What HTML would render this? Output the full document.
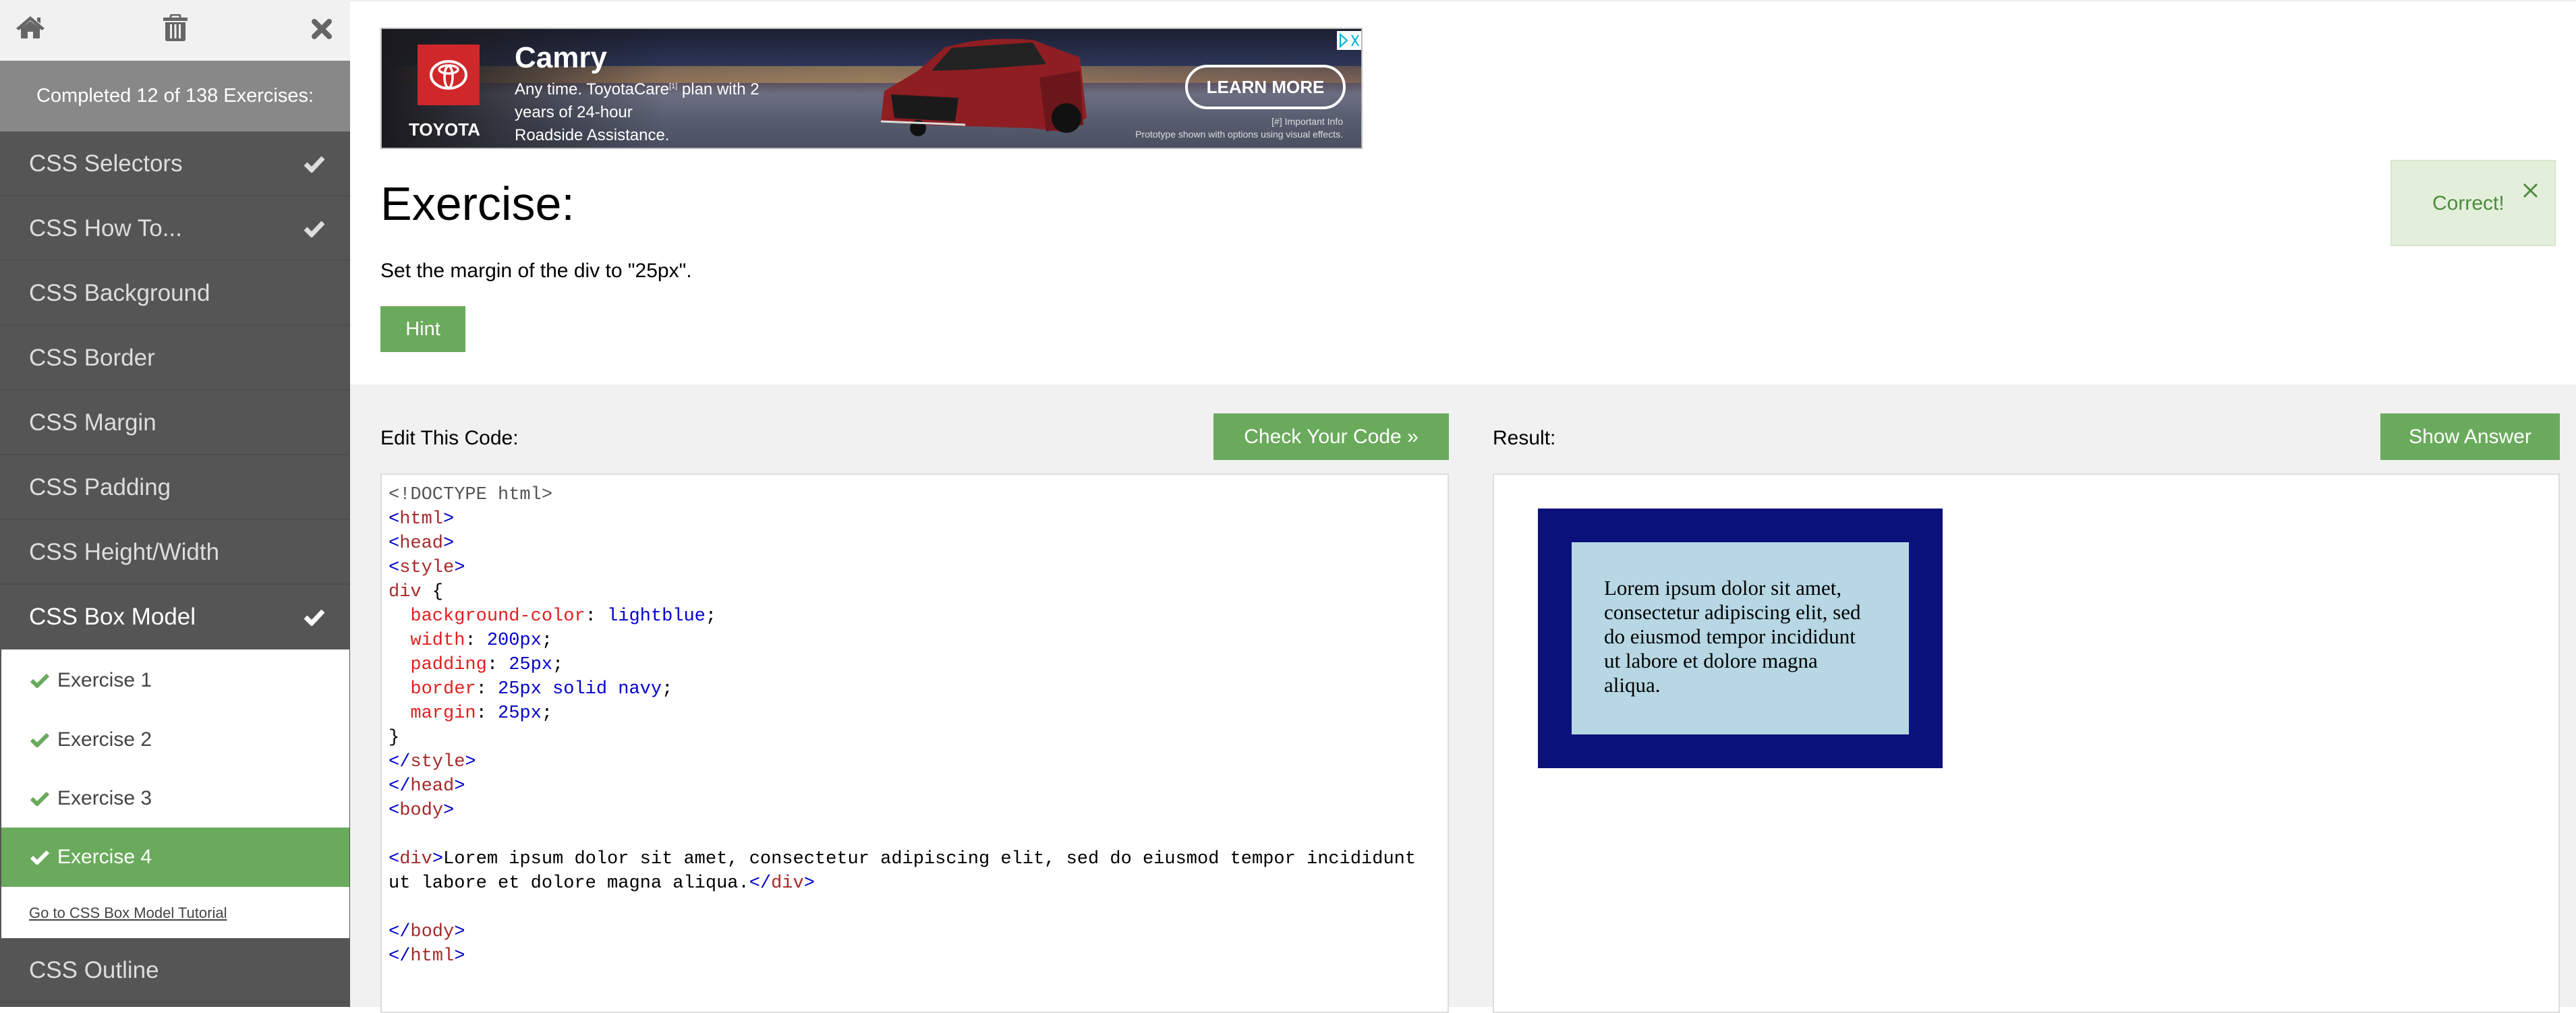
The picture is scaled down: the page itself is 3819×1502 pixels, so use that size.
<!DOCTYPE html>
<html><head><meta charset="utf-8"><style>
*{margin:0;padding:0;box-sizing:border-box}
body{width:3819px;height:1493px;overflow:hidden;background:#fff;font-family:"Liberation Sans",sans-serif;position:relative}
.abs{position:absolute}
#side{left:0;top:0;width:519px;height:1493px;background:#555}
#topbar{left:0;top:0;width:519px;height:90px;background:#f1f1f1}
#done{left:0;top:90px;width:519px;height:105px;background:#888;color:#fff;font-size:29px;text-align:center;line-height:105px}
.item{position:absolute;left:0;width:519px;height:96px;border-bottom:2px solid #4d4d4d;color:#ddd;font-size:35px;line-height:96px;padding-left:43px}
.item .ck{position:absolute;left:450px;top:35px}
#list{left:2px;top:963px;width:516px;height:428px;background:#fff}
.ex{position:absolute;left:0;width:516px;height:88px;line-height:88px;font-size:30px;color:#444;padding-left:83px}
.ex svg{position:absolute;left:42px;top:33px}
#main{left:519px;top:570px;width:3300px;height:923px;background:#f1f1f1}
.btn{position:absolute;background:#6aaa5c;color:#fff;text-align:center}
.code{font-family:"Liberation Mono",monospace;font-size:27px;line-height:36px;white-space:pre;color:#000}
.t{color:#a52a2a}.b{color:#0000cd}.p{color:#e02020}.v{color:#0000cd}
</style></head><body>
<div class="abs" style="left:0;top:0;width:3819px;height:2px;background:#eee"></div>
<div id="side" class="abs"></div>
<div id="topbar" class="abs">
<svg class="abs" style="left:22px;top:22px" width="46" height="36" viewBox="0 0 46 36"><path d="M23 2 L2 20 L6 23 L23 8 L40 23 L44 20 Z M33 4 h5 v9 l-5-4Z" fill="#666"/><path d="M9 20 L23 9 L37 20 V35 H27 V25 H19 V35 H9Z" fill="#666"/></svg>
<svg class="abs" style="left:241px;top:21px" width="38" height="41" viewBox="0 0 38 41"><rect x="1" y="5" width="36" height="5" fill="#666"/><rect x="12" y="1" width="14" height="6" rx="2" fill="none" stroke="#666" stroke-width="3"/><path d="M4 12 H34 V37 Q34 40 31 40 H7 Q4 40 4 37Z" fill="#666"/><rect x="11" y="15" width="3" height="21" fill="#f1f1f1"/><rect x="17.5" y="15" width="3" height="21" fill="#f1f1f1"/><rect x="24" y="15" width="3" height="21" fill="#f1f1f1"/></svg>
<svg class="abs" style="left:461px;top:27px" width="32" height="32" viewBox="0 0 32 32"><path d="M5 5 L27 27 M27 5 L5 27" stroke="#666" stroke-width="8" stroke-linecap="round"/></svg>
</div>
<div id="done" class="abs">Completed 12 of 138 Exercises:</div>
<div class="item" style="top:195px">CSS Selectors<svg class="ck" width="32" height="26" viewBox="0 0 32 26"><path d="M3 13 L12 22 L29 4" stroke="#ddd" stroke-width="7" fill="none"/></svg></div>
<div class="item" style="top:291px">CSS How To...<svg class="ck" width="32" height="26" viewBox="0 0 32 26"><path d="M3 13 L12 22 L29 4" stroke="#ddd" stroke-width="7" fill="none"/></svg></div>
<div class="item" style="top:387px">CSS Background</div>
<div class="item" style="top:483px">CSS Border</div>
<div class="item" style="top:579px">CSS Margin</div>
<div class="item" style="top:675px">CSS Padding</div>
<div class="item" style="top:771px">CSS Height/Width</div>
<div class="item" style="top:867px;color:#fff;border:none">CSS Box Model<svg class="ck" width="32" height="26" viewBox="0 0 32 26"><path d="M3 13 L12 22 L29 4" stroke="#fff" stroke-width="7" fill="none"/></svg></div>
<div id="list" class="abs">
<div class="ex" style="top:2px"><svg width="30" height="22" viewBox="0 0 30 22"><path d="M3 11 L11 19 L27 3" stroke="#6aaa5c" stroke-width="6" fill="none"/></svg>Exercise 1</div>
<div class="ex" style="top:90px"><svg width="30" height="22" viewBox="0 0 30 22"><path d="M3 11 L11 19 L27 3" stroke="#6aaa5c" stroke-width="6" fill="none"/></svg>Exercise 2</div>
<div class="ex" style="top:177px"><svg width="30" height="22" viewBox="0 0 30 22"><path d="M3 11 L11 19 L27 3" stroke="#6aaa5c" stroke-width="6" fill="none"/></svg>Exercise 3</div>
<div class="ex" style="top:264px;background:#6aaa5c;color:#fff"><svg width="30" height="22" viewBox="0 0 30 22"><path d="M3 11 L11 19 L27 3" stroke="#fff" stroke-width="6" fill="none"/></svg>Exercise 4</div>
<div class="abs" style="left:41px;top:378px;font-size:22px;color:#444;text-decoration:underline">Go to CSS Box Model Tutorial</div>
</div>
<div class="item" style="top:1391px">CSS Outline</div>

<!-- ad -->
<div class="abs" style="left:564px;top:41px;width:1456px;height:180px;border:2px solid #bbb;overflow:hidden;background:linear-gradient(180deg,#1b1f30 0%,#2c3556 30%,#5a5060 45%,#6a6e80 55%,#585e70 75%,#4a5062 100%)">
 <div class="abs" style="left:0;top:55px;width:1456px;height:25px;background:linear-gradient(90deg,rgba(200,140,60,.35),rgba(220,170,90,.5),rgba(200,140,60,.3))"></div>
 <div class="abs" style="left:0;top:0;width:420px;height:180px;background:linear-gradient(90deg,#1a1a1e,rgba(30,30,36,0))"></div>
 <div class="abs" style="left:53px;top:23px;width:92px;height:90px;background:#d0282a"></div>
 <svg class="abs" style="left:70px;top:45px" width="58" height="46" viewBox="0 0 58 46"><ellipse cx="29" cy="23" rx="26" ry="20" fill="none" stroke="#fff" stroke-width="4"/><ellipse cx="29" cy="15" rx="14" ry="6" fill="none" stroke="#fff" stroke-width="3.5"/><ellipse cx="29" cy="26" rx="6" ry="16" fill="none" stroke="#fff" stroke-width="3.5"/></svg>
 <div class="abs" style="left:40px;top:134px;color:#fff;font-weight:bold;font-size:26px">TOYOTA</div>
 <div class="abs" style="left:197px;top:18px;color:#fff;font-weight:bold;font-size:44px">Camry</div>
 <div class="abs" style="left:197px;top:68px;color:#fff;font-size:24px;line-height:34px">Any time. ToyotaCare<sup style="font-size:11px">[1]</sup> plan with 2<br>years of 24-hour<br>Roadside Assistance.</div>
 <svg class="abs" style="left:735px;top:12px" width="315" height="150" viewBox="0 0 315 150"><path d="M130 8 Q170 0 230 4 L300 30 L310 120 L270 140 L230 135 L60 130 L5 125 L10 80 L60 50 L100 15Z" fill="#8e1e22"/><path d="M110 16 L230 8 L250 40 L140 48 L80 50Z" fill="#222"/><path d="M20 85 L120 90 L115 125 L25 120Z" fill="#1a1a1a"/><path d="M240 60 L300 50 L305 130 L250 140Z" fill="#6b161a"/><circle cx="280" cy="120" r="22" fill="#111"/><circle cx="60" cy="135" r="12" fill="#111"/><path d="M5 125 L130 130" stroke="#ddd" stroke-width="3"/></svg>
 <div class="abs" style="left:1191px;top:53px;width:238px;height:66px;border:4px solid #fff;border-radius:33px;color:#fff;font-weight:bold;font-size:26px;text-align:center;line-height:58px">LEARN MORE</div>
 <div class="abs" style="left:1085px;top:128px;width:340px;text-align:right;color:#ddd;font-size:14px;line-height:19px">[#] Important Info<br>Prototype shown with options using visual effects.</div>
 <div class="abs" style="left:1416px;top:3px;width:36px;height:28px;background:#fff"></div>
 <svg class="abs" style="left:1418px;top:6px" width="34" height="22" viewBox="0 0 34 22"><path d="M3 2 L13 11 L3 20Z" fill="none" stroke="#00aecd" stroke-width="2"/><path d="M20 3 L30 19 M30 3 L20 19" stroke="#00aecd" stroke-width="2"/></svg>
</div>

<div class="abs" style="left:564px;top:262px;font-size:70px;color:#000">Exercise:</div>
<div class="abs" style="left:564px;top:385px;font-size:30px;color:#000">Set the margin of the div to "25px".</div>
<div class="btn" style="left:564px;top:454px;width:126px;height:68px;line-height:68px;font-size:29px">Hint</div>

<div class="abs" style="left:3544px;top:237px;width:245px;height:128px;background:#e3efdb;border:2px solid #d5e6cb"></div>
<div class="abs" style="left:3606px;top:285px;font-size:30px;color:#4f8a3e">Correct!</div>
<svg class="abs" style="left:3740px;top:271px" width="23" height="23" viewBox="0 0 23 23"><path d="M2 2 L21 21 M21 2 L2 21" stroke="#4f8a3e" stroke-width="3"/></svg>

<div id="main" class="abs"></div>
<div class="abs" style="left:564px;top:633px;font-size:30px;color:#000">Edit This Code:</div>
<div class="btn" style="left:1799px;top:613px;width:349px;height:69px;line-height:69px;font-size:30px">Check Your Code »</div>
<div class="abs" style="left:564px;top:702px;width:1584px;height:800px;background:#fff;border:2px solid #ddd"></div>
<div class="abs code" style="left:576px;top:716px"><span style="color:#555">&lt;!DOCTYPE html&gt;</span>
<span class="b">&lt;</span><span class="t">html</span><span class="b">&gt;</span>
<span class="b">&lt;</span><span class="t">head</span><span class="b">&gt;</span>
<span class="b">&lt;</span><span class="t">style</span><span class="b">&gt;</span>
<span class="t">div</span> {
  <span class="p">background-color</span>: <span class="v">lightblue</span>;
  <span class="p">width</span>: <span class="v">200px</span>;
  <span class="p">padding</span>: <span class="v">25px</span>;
  <span class="p">border</span>: <span class="v">25px solid navy</span>;
  <span class="p">margin</span>: <span class="v">25px</span>;
}
<span class="b">&lt;/</span><span class="t">style</span><span class="b">&gt;</span>
<span class="b">&lt;/</span><span class="t">head</span><span class="b">&gt;</span>
<span class="b">&lt;</span><span class="t">body</span><span class="b">&gt;</span>

<span class="b">&lt;</span><span class="t">div</span><span class="b">&gt;</span>Lorem ipsum dolor sit amet, consectetur adipiscing elit, sed do eiusmod tempor incididunt
ut labore et dolore magna aliqua.<span class="b">&lt;/</span><span class="t">div</span><span class="b">&gt;</span>

<span class="b">&lt;/</span><span class="t">body</span><span class="b">&gt;</span>
<span class="b">&lt;/</span><span class="t">html</span><span class="b">&gt;</span></div>

<div class="abs" style="left:2213px;top:633px;font-size:30px;color:#000">Result:</div>
<div class="btn" style="left:3529px;top:613px;width:266px;height:69px;line-height:69px;font-size:30px">Show Answer</div>
<div class="abs" style="left:2213px;top:702px;width:1582px;height:800px;background:#fff;border:2px solid #ddd"></div>
<div class="abs" style="left:2280px;top:754px;width:600px;height:385px;background:#0a117a"></div>
<div class="abs" style="left:2330px;top:804px;width:500px;height:285px;background:#b6d7e3;padding:50px 48px;font-family:'Liberation Serif',serif;font-size:31px;line-height:36px;color:#000">Lorem ipsum dolor sit amet, consectetur adipiscing elit, sed do eiusmod tempor incididunt ut labore et dolore magna aliqua.</div>
</body></html>
